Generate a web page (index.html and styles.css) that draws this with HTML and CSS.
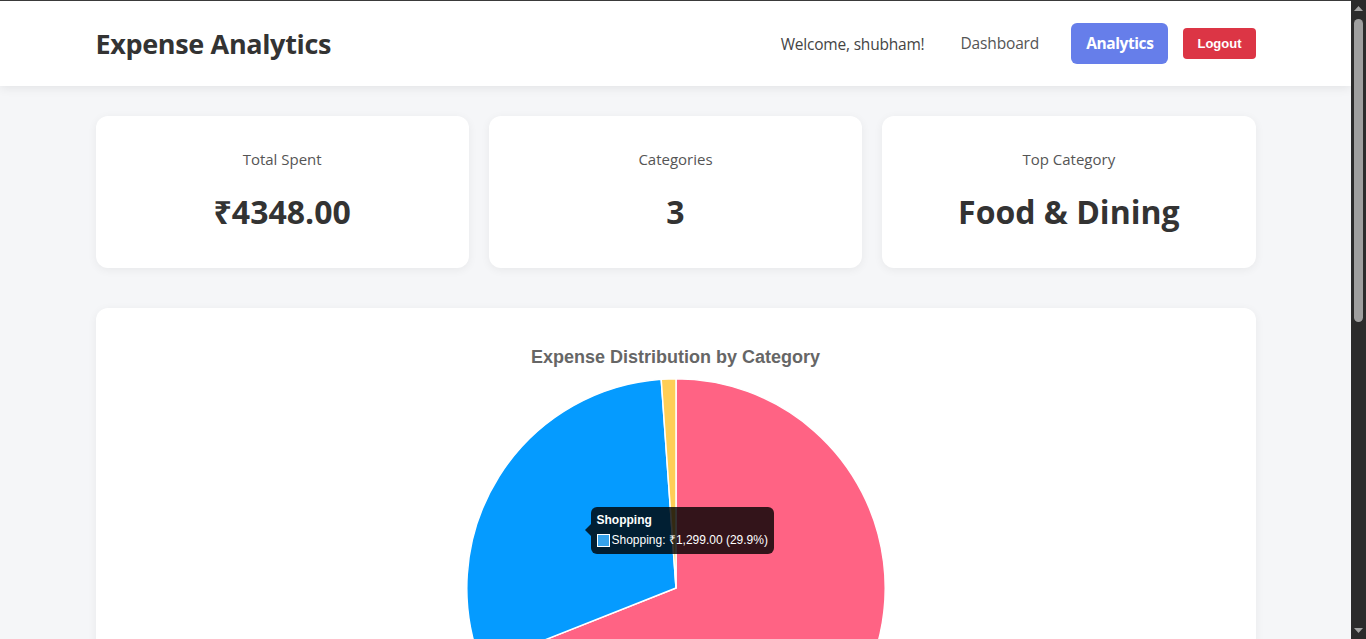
FILE: index.html
```html
<!DOCTYPE html>
<html lang="en">
<head>
<meta charset="utf-8">
<title>Expense Analytics</title>
<link rel="stylesheet" href="styles.css">
</head>
<body>
<header class="topbar">
  <div class="topbar-inner">
    <h1 class="brand">Expense Analytics</h1>
    <nav class="nav">
      <span class="welcome">Welcome, shubham!</span>
      <a class="nav-link" href="#">Dashboard</a>
      <a class="nav-link active" href="#">Analytics</a>
      <button class="logout">Logout</button>
    </nav>
  </div>
</header>

<main class="container">
  <section class="stats">
    <div class="stat-card">
      <h3 class="stat-label">Total Spent</h3>
      <p class="stat-value">₹4348.00</p>
    </div>
    <div class="stat-card">
      <h3 class="stat-label">Categories</h3>
      <p class="stat-value">3</p>
    </div>
    <div class="stat-card">
      <h3 class="stat-label">Top Category</h3>
      <p class="stat-value">Food &amp; Dining</p>
    </div>
  </section>

  <section class="chart-card">
    <h2 class="chart-title">Expense Distribution by Category</h2>
    <svg class="pie" width="420" height="420" viewBox="0 0 420 420">
      <path d="M210,210 L210,0.8 A209.2,209.2 0 1 1 15.5,287.0 Z" fill="#ff6384" stroke="#fff" stroke-width="1.5" stroke-linejoin="round"/>
      <path d="M210,210 L15.5,287.0 A209.2,209.2 0 0 1 195.2,1.3 Z" fill="#059bff" stroke="#fff" stroke-width="1.5" stroke-linejoin="round"/>
      <path d="M210,210 L195.2,1.3 A209.2,209.2 0 0 1 210,0.8 Z" fill="#ffce56" stroke="#fff" stroke-width="1.5" stroke-linejoin="round"/>
    </svg>
    <div class="tooltip">
      <div class="tip-title">Shopping</div>
      <div class="tip-row"><span class="tip-swatch"></span>Shopping: ₹1,299.00 (29.9%)</div>
    </div>
  </section>
</main>

<div class="scrollbar" aria-hidden="true">
  <div class="sb-btn"><svg width="9" height="5" viewBox="0 0 9 5"><polygon points="0,5 4.5,0 9,5" fill="#a3a3a3"/></svg></div>
  <div class="sb-track"><div class="sb-thumb"></div></div>
  <div class="sb-btn"><svg width="9" height="5" viewBox="0 0 9 5"><polygon points="0,0 9,0 4.5,5" fill="#a3a3a3"/></svg></div>
</div>
</body>
</html>
```

FILE: styles.css
```css
* { box-sizing: border-box; }

html { background: #f5f6f8; }

body {
  margin: 0;
  padding-right: 15px;
  background: #f5f6f8;
  font-family: "Open Sans", "Noto Sans", sans-serif;
  color: #333;
  border-top: 1px solid #3a3a3a;
}

/* fake browser scrollbar overlaying the right edge */
.scrollbar {
  position: fixed;
  top: 0;
  right: 0;
  width: 15px;
  height: 100vh;
  background: #2b2b2b;
  display: flex;
  flex-direction: column;
  z-index: 10;
}

.sb-btn {
  height: 17px;
  display: flex;
  align-items: center;
  justify-content: center;
}

.sb-track {
  flex: 1;
  padding: 2px 3px;
}

.sb-thumb {
  height: 303px;
  background: #9f9f9f;
  border-radius: 5px;
}

.topbar {
  background: #fff;
  height: 85px;
  box-shadow: 0 2px 10px rgba(0, 0, 0, 0.08);
  position: relative;
  z-index: 1;
}

.topbar-inner {
  max-width: 1200px;
  margin: 0 auto;
  padding: 0 20px;
  height: 100%;
  display: flex;
  align-items: center;
  justify-content: space-between;
}

.brand {
  margin: 0;
  font-size: 27px;
  font-weight: 700;
  color: #333;
  letter-spacing: -0.35px;
}

.nav {
  display: flex;
  align-items: center;
}

.welcome {
  font-size: 15.5px;
  color: #444;
  margin-right: 20px;
  letter-spacing: -0.2px;
}

.nav-link {
  text-decoration: none;
  font-size: 15.5px;
  color: #555;
  font-weight: 500;
  padding: 10px 16px;
  border-radius: 6px;
  line-height: 21px;
  letter-spacing: -0.15px;
}

.nav-link.active {
  background: #667eea;
  color: #fff;
  font-weight: 700;
  margin-left: 16px;
  padding: 10px 15px;
  letter-spacing: -0.4px;
}

.logout {
  margin-left: 15px;
  background: #dc3545;
  color: #fff;
  border: none;
  border-radius: 4px;
  font-family: "Liberation Sans", Arial, sans-serif;
  font-weight: 700;
  font-size: 13px;
  line-height: 15px;
  padding: 8px 14px;
}

.container {
  max-width: 1200px;
  margin: 0 auto;
  padding: 30px 20px 40px;
}

.stats {
  display: grid;
  grid-template-columns: repeat(3, 1fr);
  gap: 20px;
  margin-bottom: 40px;
}

.stat-card {
  background: #fff;
  border-radius: 12px;
  box-shadow: 0 2px 10px rgba(0, 0, 0, 0.06);
  height: 152px;
  padding: 32px 20px 0;
  text-align: center;
}

.stat-label {
  margin: 0;
  font-size: 15px;
  font-weight: 500;
  color: #555;
  line-height: 22px;
}

.stat-value {
  margin: 20px 0 0;
  font-size: 32px;
  font-weight: 700;
  color: #333;
  line-height: 44px;
}

.chart-card {
  position: relative;
  background: #fff;
  border-radius: 12px;
  box-shadow: 0 2px 10px rgba(0, 0, 0, 0.06);
  padding: 30px 30px 40px;
}

.chart-title {
  margin: 0;
  padding: 9px 0 9px;
  text-align: center;
  font-family: "Liberation Sans", Arial, sans-serif;
  font-size: 18px;
  font-weight: 700;
  color: #666;
  line-height: 21.6px;
}

.pie {
  display: block;
  margin: 0 auto;
}

.tooltip {
  position: absolute;
  left: 495px;
  top: 199px;
  white-space: nowrap;
  background: rgba(0, 0, 0, 0.8);
  border-radius: 6px;
  padding: 6px;
  font-family: "Liberation Sans", Arial, sans-serif;
  font-size: 12px;
  line-height: 14.4px;
  color: #fff;
}

.tooltip::before {
  content: "";
  position: absolute;
  left: -6px;
  top: 17px;
  border-style: solid;
  border-width: 6px 6px 6px 0;
  border-color: transparent rgba(0, 0, 0, 0.8) transparent transparent;
}

.tip-title {
  font-weight: 700;
  margin-bottom: 6px;
}

.tip-row {
  display: flex;
  align-items: center;
}

.tip-swatch {
  width: 13px;
  height: 13px;
  background: #36a2eb;
  border: 1px solid #fff;
  margin-right: 2px;
}
```
